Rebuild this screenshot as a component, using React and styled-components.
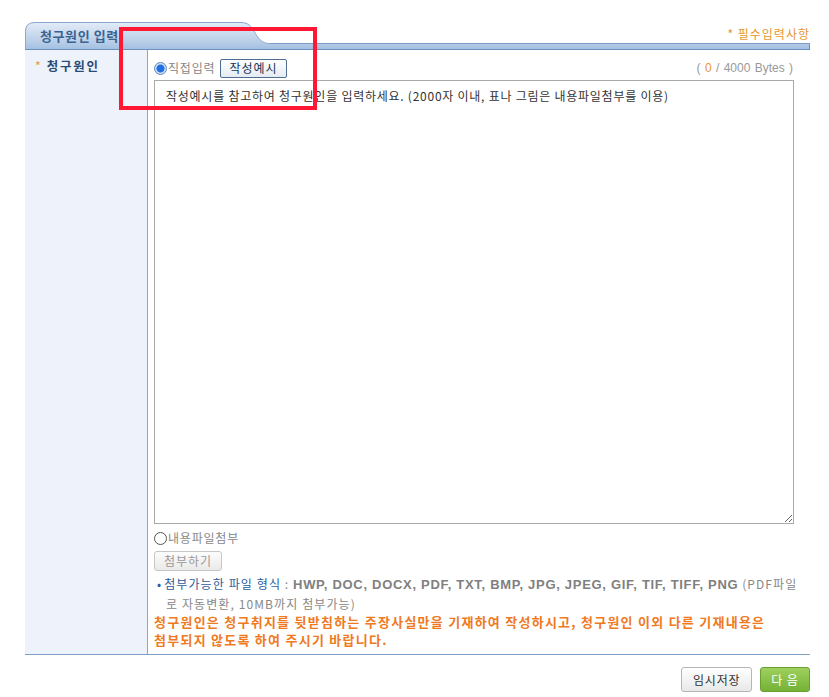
import React from 'react';
import styled, { createGlobalStyle } from 'styled-components';

const GlobalStyle = createGlobalStyle`
  html, body {
    margin: 0;
    padding: 0;
    background: #fff;
  }
  body {
    font-family: "Noto Sans CJK KR", "Noto Sans", sans-serif;
    font-size: 12px;
    color: #333;
  }
`;

const Page = styled.div`
  position: relative;
  padding: 22px 0 0 25px;
  width: 785px;
`;

const HeaderRow = styled.div`
  display: flex;
  align-items: flex-end;
  height: 22px;
`;

const Tab = styled.div`
  width: 245px;
  height: 22px;
  flex: none;
  display: flex;
  align-items: center;
  padding-left: 15px;
  box-sizing: border-box;
  background-image: url("data:image/svg+xml;utf8,${encodeURIComponent(
    `<svg xmlns='http://www.w3.org/2000/svg' width='245' height='22'><defs><linearGradient id='g' x1='0' y1='0' x2='0' y2='1'><stop offset='0' stop-color='#e3ecf7'/><stop offset='1' stop-color='#b3cae6'/></linearGradient></defs><path d='M0,22 V9 Q0.5,0.5 10,0.5 H216 C226,0.5 228,8 232,14 C236,20 240,21.5 245,21.5 V22 Z' fill='url(#g)'/><path d='M0.5,22 V9 Q0.5,0.5 10,0.5 H216 C226,0.5 228,8 232,14 C236,20 240,21.5 245,21.5' fill='none' stroke='#8aa8cc'/></svg>`
  )}");
`;

const TabTitle = styled.span`
  font-weight: bold;
  font-size: 13px;
  color: #3a6391;
  letter-spacing: 0.6px;
  line-height: 14px;
  margin-top: 5px;
`;

const HeaderRest = styled.div`
  flex: 1;
  height: 22px;
  border-bottom: 1px solid #7b9cc6;
  box-sizing: border-box;
  display: flex;
  justify-content: flex-end;
  align-items: center;
  padding-top: 3px;
`;

const Required = styled.span`
  color: #e8962f;
  font-size: 12px;
  line-height: 14px;
  letter-spacing: 1px;
`;

const Bar = styled.div`
  height: 5px;
  background: linear-gradient(#b2cae6, #a3bfe2);
  border-left: 1px solid #8aa8cc;
  border-right: 1px solid #6d91be;
  border-bottom: 1px solid #6d91be;
`;

const Body = styled.div`
  display: flex;
  border-bottom: 1px solid #7f9fc9;
`;

const LabelCol = styled.div`
  width: 123px;
  flex: none;
  background: #eef3fb;
  border-right: 1px solid #8ca5c5;
  padding: 8px 0 0 10px;
  box-sizing: border-box;
`;

const Label = styled.div`
  font-weight: bold;
  font-size: 12.5px;
  color: #2c4b77;
  letter-spacing: 1.8px;
  line-height: 16px;
`;

const Star = styled.span`
  color: #e8962f;
  margin-right: 4px;
  font-weight: normal;
`;

const ContentCol = styled.div`
  flex: 1;
  padding: 8px 0 5px 6px;
  min-width: 0;
`;

const TopRow = styled.div`
  display: flex;
  align-items: center;
  justify-content: space-between;
  width: 640px;
  height: 20px;
`;

const RadioLabel = styled.label`
  display: flex;
  align-items: center;
  color: #888;
  font-size: 12px;
  letter-spacing: 0.8px;
  line-height: 16px;
`;

const RadioMark = styled.span`
  width: 11px;
  height: 11px;
  border-radius: 50%;
  border: 1px solid ${p => (p.$checked ? '#5d87c2' : '#555')};
  background: ${p =>
    p.$checked
      ? 'radial-gradient(circle, #1f6fe0 0 3.5px, #cfe0f6 4.5px)'
      : '#fff'};
  margin-right: 1px;
  flex: none;
`;

const SmallButton = styled.button`
  font-family: inherit;
  font-size: 12px;
  line-height: 14px;
  height: ${p => (p.$disabled ? '20px' : '19px')};
  padding: 0 ${p => (p.$disabled ? '9px' : '8px')};
  border-radius: ${p => (p.$disabled ? '3px' : '2px')};
  cursor: pointer;
  border: 1px solid ${p => (p.$disabled ? '#c6c6c6' : '#4e6d8f')};
  color: ${p => (p.$disabled ? '#999' : '#1b3552')};
  background: ${p =>
    p.$disabled
      ? 'linear-gradient(#fdfdfd, #e9e9e9)'
      : 'linear-gradient(#ffffff, #e4ebf3)'};
  letter-spacing: 1px;
`;

const Bytes = styled.span`
  color: #999;
  font-family: "Liberation Sans", Arial, sans-serif;
  font-size: 12px;
  margin-right: 1px;
  word-spacing: 1px;
`;

const Count = styled.span`
  color: #e8962f;
`;

const TextArea = styled.textarea`
  display: block;
  width: 640px;
  height: 444px;
  margin-top: 2px;
  box-sizing: border-box;
  border: 1px solid #aaa;
  padding: 7px 11px;
  font-family: "Noto Sans CJK KR", sans-serif;
  font-size: 12px;
  letter-spacing: 0.75px;
  line-height: 16px;
  color: #333;
  outline: none;
  resize: vertical;
  &::placeholder {
    color: #333;
    opacity: 1;
  }
`;

const FileRow = styled.div`
  margin-top: 6px;
  height: 16px;
  display: flex;
  align-items: center;
`;

const AttachRow = styled.div`
  margin-top: 5px;
  height: 20px;
`;

const Notice = styled.div`
  margin-top: 3px;
  font-size: 12px;
  line-height: 19px;
  color: #888;
  letter-spacing: 1.1px;
`;

const NoticeLine = styled.div`
  white-space: nowrap;
  padding-left: ${p => (p.$indent ? '12px' : '3px')};
`;

const Dot = styled.span`
  color: #2a5d9c;
  margin-right: 2px;
`;

const NoticeTitle = styled.span`
  color: #2a5d9c;
`;

const Formats = styled.span`
  font-family: "Liberation Sans", Arial, sans-serif;
  font-weight: bold;
  font-size: 13px;
  letter-spacing: 0.7px;
  color: #808080;
`;

const Warning = styled.div`
  color: #ef7a1f;
  font-weight: bold;
  font-size: 13px;
  letter-spacing: 1.25px;
  line-height: 18px;
  white-space: nowrap;
`;

const Footer = styled.div`
  display: flex;
  justify-content: flex-end;
  gap: 8px;
  margin-top: 12px;
`;

const FooterButton = styled.button`
  font-family: inherit;
  font-size: 12px;
  height: 25px;
  padding: 0 ${p => (p.$primary ? '10.5px' : '10.5px')};
  border-radius: 3px;
  cursor: pointer;
  letter-spacing: 0.8px;
  border: 1px solid ${p => (p.$primary ? '#6a9f35' : '#b5b5b5')};
  color: ${p => (p.$primary ? '#fff' : '#333')};
  background: ${p =>
    p.$primary
      ? 'linear-gradient(#9ed05e, #74b236)'
      : 'linear-gradient(#ffffff, #e8e8e8)'};
`;

const Highlight = styled.div`
  position: absolute;
  left: 119px;
  top: 27px;
  width: 198px;
  height: 83px;
  box-sizing: border-box;
  border: 4px solid #ff1733;
  pointer-events: none;
`;

export default function App() {
  return (
    <>
      <GlobalStyle />
      <Page>
        <HeaderRow>
          <Tab>
            <TabTitle>청구원인 입력</TabTitle>
          </Tab>
          <HeaderRest>
            <Required>* 필수입력사항</Required>
          </HeaderRest>
        </HeaderRow>
        <Bar />
        <Body>
          <LabelCol>
            <Label>
              <Star>*</Star>청구원인
            </Label>
          </LabelCol>
          <ContentCol>
            <TopRow>
              <RadioLabel>
                <RadioMark $checked />
                직접입력
                <SmallButton style={{ marginLeft: 5 }}>작성예시</SmallButton>
              </RadioLabel>
              <Bytes>
                ( <Count>0</Count> / 4000 Bytes )
              </Bytes>
            </TopRow>
            <TextArea placeholder="작성예시를 참고하여 청구원인을 입력하세요. (2000자 이내, 표나 그림은 내용파일첨부를 이용)" />
            <FileRow>
              <RadioLabel>
                <RadioMark />
                내용파일첨부
              </RadioLabel>
            </FileRow>
            <AttachRow>
              <SmallButton $disabled>첨부하기</SmallButton>
            </AttachRow>
            <Notice>
              <NoticeLine>
                <Dot>•</Dot>
                <NoticeTitle>첨부가능한 파일 형식</NoticeTitle> :{' '}
                <Formats>HWP, DOC, DOCX, PDF, TXT, BMP, JPG, JPEG, GIF, TIF, TIFF, PNG</Formats> (PDF파일
              </NoticeLine>
              <NoticeLine $indent>로 자동변환, 10MB까지 첨부가능)</NoticeLine>
            </Notice>
            <Warning>
              청구원인은 청구취지를 뒷받침하는 주장사실만을 기재하여 작성하시고, 청구원인 이외 다른 기재내용은
              <br />
              첨부되지 않도록 하여 주시기 바랍니다.
            </Warning>
          </ContentCol>
        </Body>
        <Footer>
          <FooterButton>임시저장</FooterButton>
          <FooterButton $primary>다 음</FooterButton>
        </Footer>
        <Highlight />
      </Page>
    </>
  );
}
